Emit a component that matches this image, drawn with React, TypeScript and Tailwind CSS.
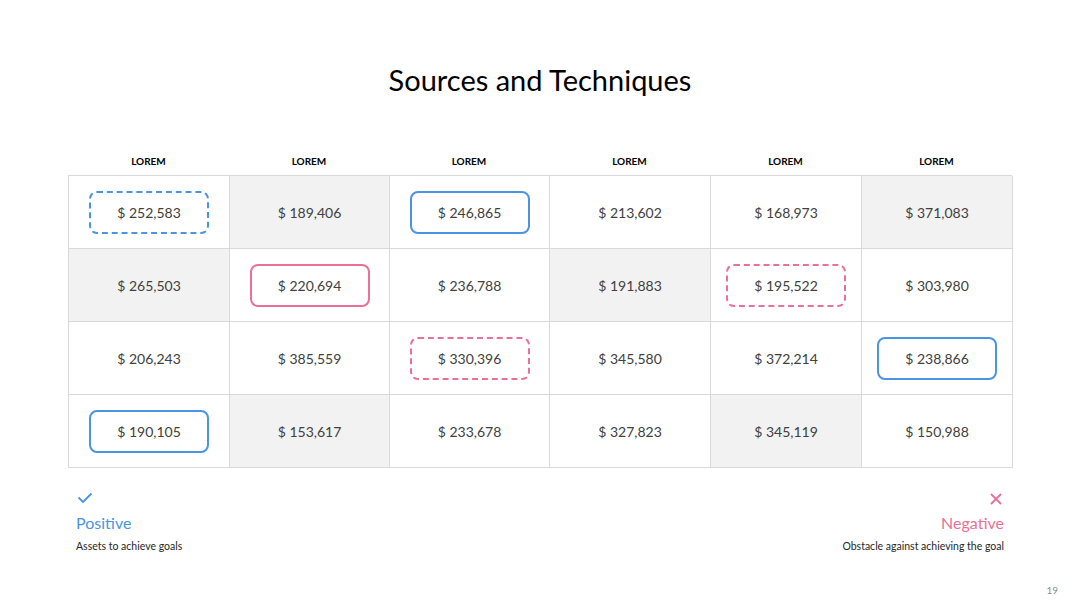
import React from "react";

type Mark = "none" | "blue" | "blueDash" | "pink" | "pinkDash";

const cols = ["LOREM", "LOREM", "LOREM", "LOREM", "LOREM", "LOREM"];

const rows: { v: string; gray?: boolean; mark?: Mark }[][] = [
  [
    { v: "$ 252,583", mark: "blueDash" },
    { v: "$ 189,406", gray: true },
    { v: "$ 246,865", mark: "blue" },
    { v: "$ 213,602" },
    { v: "$ 168,973" },
    { v: "$ 371,083", gray: true },
  ],
  [
    { v: "$ 265,503", gray: true },
    { v: "$ 220,694", mark: "pink" },
    { v: "$ 236,788" },
    { v: "$ 191,883", gray: true },
    { v: "$ 195,522", mark: "pinkDash" },
    { v: "$ 303,980" },
  ],
  [
    { v: "$ 206,243" },
    { v: "$ 385,559" },
    { v: "$ 330,396", mark: "pinkDash" },
    { v: "$ 345,580" },
    { v: "$ 372,214" },
    { v: "$ 238,866", mark: "blue" },
  ],
  [
    { v: "$ 190,105", mark: "blue" },
    { v: "$ 153,617", gray: true },
    { v: "$ 233,678" },
    { v: "$ 327,823" },
    { v: "$ 345,119", gray: true },
    { v: "$ 150,988" },
  ],
];

const markClass: Record<Mark, string> = {
  none: "",
  blue: "border-2 border-solid border-[#4a94e4] rounded-[8px]",
  blueDash: "border-2 border-dashed border-[#4a94e4] rounded-[8px]",
  pink: "border-2 border-solid border-[#eb7096] rounded-[8px]",
  pinkDash: "border-2 border-dashed border-[#eb7096] rounded-[8px]",
};

const grid = "grid grid-cols-[161px_160px_160px_161px_151px_151px]";

export default function App() {
  return (
    <div className="w-[1080px] h-[608px] bg-white flex flex-col font-['Lato','Liberation_Sans',sans-serif]">
      <h1 className="mt-[62px] text-center text-[29px] leading-[36px] text-black">
        Sources and Techniques
      </h1>

      <div className={`${grid} mt-[53px] ml-[68px] h-[24px]`}>
        {cols.map((c, i) => (
          <div key={i} className="text-center text-[10px] leading-[20px] font-bold text-black">
            {c}
          </div>
        ))}
      </div>

      <div className={`${grid} ml-[68px] w-[944px] border-l border-t border-[#d9d9d9]`}>
        {rows.map((r, ri) =>
          r.map((c, ci) => (
            <div
              key={`${ri}-${ci}`}
              className={`h-[73px] border-r border-b border-[#d9d9d9] flex items-center justify-center ${
                c.gray ? "bg-[#f2f2f2]" : "bg-white"
              }`}
            >
              <div
                className={`w-[120px] h-[43px] flex items-center justify-center text-[14px] text-[#404040] ${
                  markClass[c.mark ?? "none"]
                }`}
              >
                {c.v}
              </div>
            </div>
          ))
        )}
      </div>

      <div className="flex justify-between px-[76px] mt-[24px]">
        <div className="flex flex-col items-start">
          <svg width="16" height="12" viewBox="0 0 16 12" className="ml-[1px]">
            <path d="M1.5 5.5 L6 10 L14.5 1.5" fill="none" stroke="#4a94e4" strokeWidth="1.8" />
          </svg>
          <div className="mt-[9px] text-[16px] leading-[20px] text-[#4a94e4]">Positive</div>
          <div className="mt-[6px] text-[10.5px] leading-[14px] text-[#262626]">Assets to achieve goals</div>
        </div>
        <div className="flex flex-col items-end">
          <svg width="14" height="14" viewBox="0 0 14 14" className="mr-[1px]">
            <path d="M2 2 L12 12 M12 2 L2 12" fill="none" stroke="#eb7096" strokeWidth="1.8" />
          </svg>
          <div className="mt-[7px] text-[16px] leading-[20px] text-[#eb7096]">Negative</div>
          <div className="mt-[6px] text-[10.5px] leading-[14px] text-[#262626]">
            Obstacle against achieving the goal
          </div>
        </div>
      </div>

      <div className="mt-auto mb-[12px] pr-[22px] text-right text-[10px] leading-[12px] text-[#8c8c8c]">
        19
      </div>
    </div>
  );
}
